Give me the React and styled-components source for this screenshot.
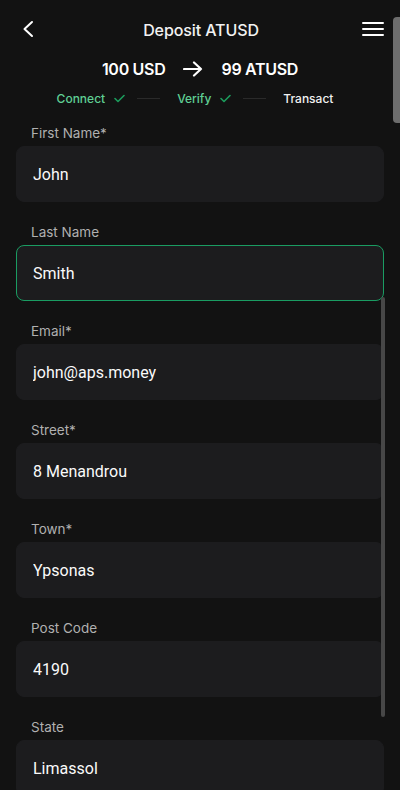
import React, { useLayoutEffect, useRef } from 'react';
import styled, { createGlobalStyle } from 'styled-components';

const GlobalStyle = createGlobalStyle`
  html, body {
    margin: 0;
    padding: 0;
    background: #121212;
  }
  body {
    font-family: Inter, "Noto Sans", sans-serif;
    color: #f2f2f2;
  }
  * { box-sizing: border-box; }
`;

const fields = [
  { label: 'First Name*', value: 'John' },
  { label: 'Last Name', value: 'Smith', active: true },
  { label: 'Email*', value: 'john@aps.money' },
  { label: 'Street*', value: '8 Menandrou' },
  { label: 'Town*', value: 'Ypsonas' },
  { label: 'Post Code', value: '4190' },
  { label: 'State', value: 'Limassol' },
  { label: 'Country*', value: 'Cyprus' },
];

const steps = [
  { name: 'Connect', done: true },
  { name: 'Verify', done: true },
  { name: 'Transact', done: false },
];

export default function App() {
  const scrollRef = useRef(null);

  // the form is shown scrolled a little past its top
  useLayoutEffect(() => {
    if (scrollRef.current) scrollRef.current.scrollTop = 23;
  }, []);

  return (
    <Page>
      <GlobalStyle />
      <TopBar>
        <IconButton aria-label="Back">
          <svg width="20" height="20" viewBox="0 0 20 20" fill="none">
            <path d="M13 3L5.5 10L13 17" stroke="#fff" strokeWidth="2" strokeLinecap="round" strokeLinejoin="round" />
          </svg>
        </IconButton>
        <Title>Deposit ATUSD</Title>
        <IconButton aria-label="Menu">
          <svg width="22" height="16" viewBox="0 0 22 16" fill="none">
            <path d="M1 2H21M1 8H21M1 14H21" stroke="#fff" strokeWidth="2" strokeLinecap="round" />
          </svg>
        </IconButton>
      </TopBar>

      <Amounts>
        <span>100 USD</span>
        <svg width="20" height="16" viewBox="0 0 20 16" fill="none">
          <path d="M1 8H18M11 1.5L18 8L11 14.5" stroke="#fff" strokeWidth="2.2" strokeLinecap="round" strokeLinejoin="round" />
        </svg>
        <span>99 ATUSD</span>
      </Amounts>

      <Steps>
        {steps.map((s, i) => (
          <React.Fragment key={s.name}>
            <Step $done={s.done}>
              {s.name}
              {s.done && (
                <svg width="11" height="9" viewBox="0 0 11 9" fill="none">
                  <path d="M1 4.5L4 7.5L10 1.5" stroke="#1c9c5c" strokeWidth="1.6" strokeLinecap="round" strokeLinejoin="round" />
                </svg>
              )}
            </Step>
            {i < steps.length - 1 && <StepLine />}
          </React.Fragment>
        ))}
      </Steps>

      <FormArea>
        <FormScroll ref={scrollRef}>
          {fields.map((f) => (
            <Field key={f.label}>
              <Label>{f.label}</Label>
              <Input $active={f.active} defaultValue={f.value} readOnly />
            </Field>
          ))}
        </FormScroll>
        <InnerThumb />
      </FormArea>

      <PageThumb />
    </Page>
  );
}

const Page = styled.div`
  position: relative;
  height: 100vh;
  display: flex;
  flex-direction: column;
  overflow: hidden;
  background: #121212;
`;

const TopBar = styled.div`
  height: 58px;
  display: flex;
  align-items: center;
  justify-content: space-between;
  padding: 0 15px 0 17px;
`;

const IconButton = styled.button`
  width: 24px;
  height: 24px;
  display: flex;
  align-items: center;
  justify-content: center;
  padding: 0;
  border: none;
  background: none;
  cursor: pointer;
`;

const Title = styled.h1`
  margin: 0 0 -2px;
  font-size: 16px;
  font-weight: 500;
  color: #f2f2f2;
  letter-spacing: -0.1px;
`;

const Amounts = styled.div`
  height: 22px;
  display: flex;
  align-items: center;
  justify-content: center;
  gap: 18px;
  font-size: 16px;
  font-weight: 600;
  letter-spacing: -0.3px;
  color: #fff;
`;

const Steps = styled.div`
  height: 20px;
  margin-top: 8px;
  display: flex;
  align-items: center;
  justify-content: center;
  padding-right: 10px;
`;

const Step = styled.div`
  display: flex;
  align-items: center;
  gap: 9px;
  font-size: 12px;
  font-weight: 500;
  color: ${(p) => (p.$done ? '#5fcf94' : '#f0f0f0')};
`;

const StepLine = styled.div`
  width: 23px;
  height: 1px;
  margin: 0 17px 0 12px;
  background: #2a2a2a;
`;

const FormArea = styled.div`
  position: relative;
  flex: 1;
  min-height: 0;
  margin-top: 20px;
`;

const FormScroll = styled.div`
  height: 100%;
  overflow-y: auto;
  padding: 20px 16px 40px;
  display: flex;
  flex-direction: column;
  gap: 22px;
  scrollbar-width: none;
  &::-webkit-scrollbar { display: none; }
`;

const Field = styled.div`
  display: flex;
  flex-direction: column;
  gap: 4px;
  flex-shrink: 0;
`;

const Label = styled.label`
  padding-left: 15px;
  font-size: 13.5px;
  line-height: 17px;
  color: #b0b0b0;
`;

const Input = styled.input`
  height: 56px;
  width: 100%;
  padding: 0 16px;
  border-radius: 8px;
  border: 1px solid ${(p) => (p.$active ? '#1a9c62' : '#1c1c1e')};
  background: #1c1c1e;
  color: #fafafa;
  font-family: Roboto, "Noto Sans", sans-serif;
  font-size: 16px;
  outline: none;
`;

const InnerThumb = styled.div`
  position: absolute;
  right: 15px;
  top: 169px;
  width: 4px;
  height: 420px;
  border-radius: 2px;
  background: #474747;
`;

const PageThumb = styled.div`
  position: absolute;
  right: 0;
  top: 17px;
  width: 7px;
  height: 106px;
  border-radius: 4px 0 0 4px;
  background: #6d6d6d;
`;
